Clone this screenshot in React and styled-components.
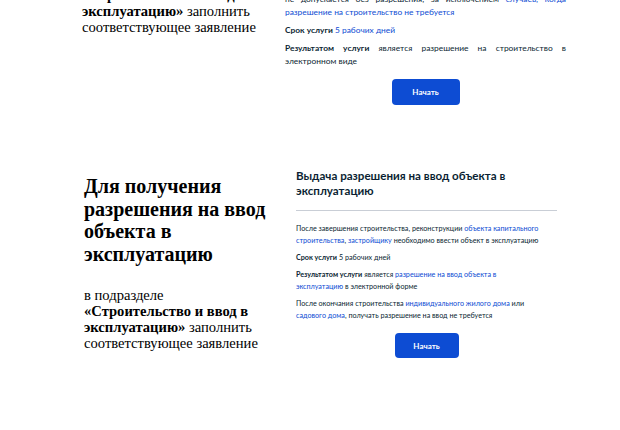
import React from "react";
import styled, { createGlobalStyle } from "styled-components";

const Global = createGlobalStyle`
  html, body { margin: 0; padding: 0; background: #ffffff; }
  body { width: 620px; height: 430px; overflow: hidden; }
`;

const Page = styled.div`
  display: flex;
  flex-direction: column;
  gap: 63px;
`;

const Scrolled = styled.div`
  height: 105px;
  overflow: hidden;
  display: flex;
  flex-direction: column;
  justify-content: flex-end;
`;

const Section = styled.section`
  display: grid;
  grid-template-columns: ${(p) => p.$left}px ${(p) => p.$card}px;
  column-gap: ${(p) => p.$gap}px;
  padding-left: ${(p) => p.$x}px;
  align-items: ${(p) => p.$align || "center"};
`;

const Intro = styled.div`
  font-family: "Liberation Serif", "Times New Roman", serif;
  color: #000;
  padding-bottom: ${(p) => p.$bottom || 0}px;
`;

const Heading = styled.h2`
  margin: 0 0 22px;
  font-size: 20px;
  line-height: 22.5px;
  font-weight: 700;
`;

const Lead = styled.p`
  margin: 0;
  font-size: 14.6px;
  line-height: 16px;
  b { font-weight: 700; }
`;

const Card = styled.div`
  display: flex;
  flex-direction: column;
  font-family: Lato, "Noto Sans", sans-serif;
  color: #0b1f33;
  font-size: ${(p) => p.$fs}px;
  line-height: ${(p) => p.$lh}px;
`;

const Title = styled.h3`
  margin: 0;
  font-size: 11.6px;
  line-height: 15px;
  font-weight: 700;
  color: #0b1f33;
`;

const Divider = styled.hr`
  border: 0;
  height: 1px;
  background: #c9ced6;
  margin: 12px 0 12px;
  width: 100%;
`;

const Para = styled.p`
  margin: 0 0 5px;
  text-align: ${(p) => (p.$justify ? "justify" : "left")};
  b { font-weight: 700; }
`;

const Link = styled.span`
  color: #0d4cd3;
`;

const Start = styled.button`
  align-self: center;
  margin-top: 6px;
  width: ${(p) => p.$w}px;
  height: ${(p) => p.$h}px;
  border: 0;
  border-radius: 4px;
  background: #0d4cd3;
  color: #ffffff;
  font-family: Lato, "Noto Sans", sans-serif;
  font-size: 8px;
  font-weight: 700;
  cursor: pointer;
`;

export default function App() {
  return (
    <>
      <Global />
      <Page>
        <Scrolled>
          <Section $x={82} $left={200} $gap={3} $card={281} $align="end">
            <Intro $bottom={70}>
              <Heading>Для получения разрешения на строительство</Heading>
              <Lead>
                в подразделе
                <br />
                <b>«Строительство и ввод в эксплуатацию»</b> заполнить
                соответствующее заявление
              </Lead>
            </Intro>
            <Card $fs={8.4} $lh={13}>
              <Title>Выдача разрешения на строительство</Title>
              <Divider />
              <Para $justify>
                Строительство, реконструкция объектов капитального строительства
                не допускается без разрешения, за исключением{" "}
                <Link>случаев, когда разрешение на строительство не требуется</Link>
              </Para>
              <Para>
                <b>Срок услуги</b> <Link>5 рабочих дней</Link>
              </Para>
              <Para $justify>
                <b>Результатом услуги</b> является разрешение на строительство в
                электронном виде
              </Para>
              <Start $w={68} $h={26}>Начать</Start>
            </Card>
          </Section>
        </Scrolled>

        <Section $x={84} $left={200} $gap={12} $card={261}>
          <Intro>
            <Heading>Для получения разрешения на ввод объекта в эксплуатацию</Heading>
            <Lead>
              в подразделе
              <br />
              <b>«Строительство и ввод в эксплуатацию»</b> заполнить
              соответствующее заявление
            </Lead>
          </Intro>
          <Card $fs={7.2} $lh={12}>
            <Title>Выдача разрешения на ввод объекта в эксплуатацию</Title>
            <Divider />
            <Para>
              После завершения строительства, реконструкции{" "}
              <Link>объекта капитального строительства</Link>,{" "}
              <Link>застройщику</Link> необходимо ввести объект в эксплуатацию
            </Para>
            <Para>
              <b>Срок услуги</b> 5 рабочих дней
            </Para>
            <Para>
              <b>Результатом услуги</b> является{" "}
              <Link>
                разрешение на ввод объекта в<br />
                эксплуатацию
              </Link>{" "}
              в электронной форме
            </Para>
            <Para>
              После окончания строительства{" "}
              <Link>индивидуального жилого дома</Link> или
              <br />
              <Link>садового дома</Link>, получать разрешение на ввод не требуется
            </Para>
            <Start $w={64} $h={25}>Начать</Start>
          </Card>
        </Section>
      </Page>
    </>
  );
}
